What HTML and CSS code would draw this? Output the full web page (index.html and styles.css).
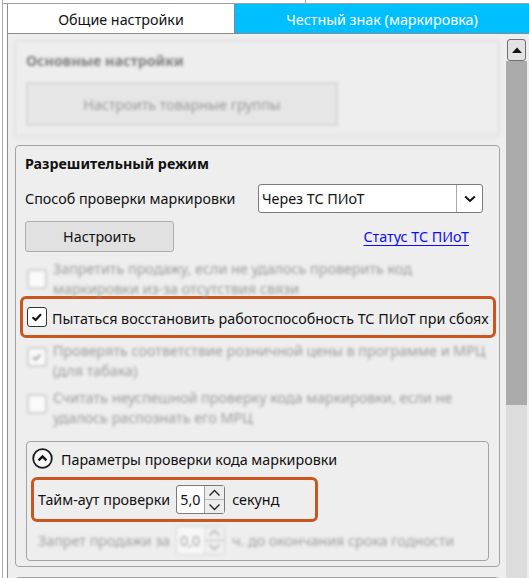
FILE: index.html
```html
<!DOCTYPE html>
<html lang="ru">
<head>
<meta charset="utf-8">
<title>Честный знак (маркировка)</title>
<link rel="stylesheet" href="styles.css">
</head>
<body>
<div class="frame">
  <div class="strip"><div class="strip-left"></div><div class="strip-right"></div></div>
  <div class="pane">
    <div class="tabs">
      <div class="tab tab-inactive">Общие настройки</div>
      <div class="tab tab-active">Честный знак (маркировка)</div>
    </div>
    <div class="content">
      <div class="scroll-area">
        <section class="group group-basic">
          <div class="group-title">Основные настройки</div>
          <div class="btn btn-wide">Настроить товарные группы</div>
        </section>

        <section class="group group-perm">
          <div class="group-title">Разрешительный режим</div>
          <div class="row-method">
            <span class="label">Способ проверки маркировки</span>
            <div class="combo">
              <span class="combo-text">Через ТС ПИоТ</span>
              <span class="combo-btn">
                <svg width="12" height="8" viewBox="0 0 12 8"><path d="M1.2 1.5 L6 6 L10.8 1.5" fill="none" stroke="#111" stroke-width="2"/></svg>
              </span>
            </div>
          </div>
          <div class="row-actions">
            <div class="btn btn-setup">Настроить</div>
            <a class="link" href="#">Статус ТС ПИоТ</a>
          </div>

          <div class="check check-off cb1">
            <span class="box box-off"></span>
            <span class="check-text">Запретить продажу, если не удалось проверить код<br>маркировки из-за отсутствия связи</span>
          </div>

          <div class="hl check-hl">
            <span class="box box-on">
              <svg width="18" height="18" viewBox="0 0 18 18"><path d="M4.5 9.2 L7.6 12 L13 6.2" fill="none" stroke="#111" stroke-width="2.1"/></svg>
            </span>
            <span class="check-text">Пытаться восстановить работоспособность ТС ПИоТ при сбоях</span>
          </div>

          <div class="check check-off cb2">
            <span class="box box-off">
              <svg width="18" height="18" viewBox="0 0 18 18"><path d="M4.5 9.2 L7.6 12 L13 6.2" fill="none" stroke="#9a9a9a" stroke-width="2"/></svg>
            </span>
            <span class="check-text">Проверять соответствие розничной цены в программе и МРЦ<br>(для табака)</span>
          </div>

          <div class="check check-off cb3">
            <span class="box box-off"></span>
            <span class="check-text">Считать неуспешной проверку кода маркировки, если не<br>удалось распознать его МРЦ</span>
          </div>

          <section class="subgroup">
            <div class="sub-header">
              <svg class="collapse-icon" width="21" height="21" viewBox="0 0 21 21"><circle cx="10.5" cy="10.5" r="9.3" fill="#f7f7f7" stroke="#1a1a1a" stroke-width="1.8"/><path d="M6.6 12.4 L10.5 8.5 L14.4 12.4" fill="none" stroke="#111" stroke-width="2.3"/></svg>
              <span>Параметры проверки кода маркировки</span>
            </div>
            <div class="hl timeout-row">
              <span>Тайм-аут проверки</span>
              <div class="spin">
                <span class="spin-val">5,0</span>
                <span class="spin-btns">
                  <span class="spin-half spin-up"><svg width="13" height="8" viewBox="0 0 13 8"><path d="M1.5 6.5 L6.5 1.5 L11.5 6.5" fill="none" stroke="#222" stroke-width="1.4"/></svg></span>
                  <span class="spin-half"><svg width="13" height="8" viewBox="0 0 13 8"><path d="M1.5 1.5 L6.5 6.5 L11.5 1.5" fill="none" stroke="#222" stroke-width="1.4"/></svg></span>
                </span>
              </div>
              <span class="unit">секунд</span>
            </div>
            <div class="expiry-row">
              <span>Запрет продажи за</span>
              <div class="spin spin-off">
                <span class="spin-val">0,0</span>
                <span class="spin-btns">
                  <span class="spin-half spin-up"><svg width="13" height="8" viewBox="0 0 13 8"><path d="M1.5 6.5 L6.5 1.5 L11.5 6.5" fill="none" stroke="#aaa" stroke-width="1.4"/></svg></span>
                  <span class="spin-half"><svg width="13" height="8" viewBox="0 0 13 8"><path d="M1.5 1.5 L6.5 6.5 L11.5 1.5" fill="none" stroke="#aaa" stroke-width="1.4"/></svg></span>
                </span>
              </div>
              <span class="unit">ч. до окончания срока годности</span>
            </div>
          </section>
        </section>

        <section class="group group-next"></section>
      </div>
      <div class="scrollbar">
        <div class="sb-up"><svg width="10" height="6" viewBox="0 0 10 6"><path d="M0 6 L5 0.5 L10 6 Z" fill="#111"/></svg></div>
        <div class="sb-thumb"></div>
        <div class="sb-track"></div>
      </div>
    </div>
  </div>
</div>
</body>
</html>
```

FILE: styles.css
```css
* { box-sizing: border-box; }

html, body {
  margin: 0;
  padding: 0;
}

body {
  width: 529px;
  height: 578px;
  overflow: hidden;
  background: #ffffff;
  font-family: "Noto Sans", "Open Sans", sans-serif;
  font-size: 14.3px;
  color: #111111;
}

.frame {
  margin-left: 2px;
  border-left: 1px solid #a8a8a8;
  height: 578px;
}

.strip {
  height: 4px;
  display: flex;
  border-bottom: 1px solid #a0a0a0;
}

.strip-left {
  width: 303px;
  border-right: 1px solid #a0a0a0;
}

.strip-right { flex: 1; }

.pane {
  margin-left: 4px;
  border-left: 1px solid #8f8f8f;
  height: 574px;
  display: flex;
  flex-direction: column;
}

.tabs {
  display: flex;
  height: 30px;
  flex: none;
  border-bottom: 1px solid #8a8a8a;
}

.tab {
  display: flex;
  align-items: center;
  justify-content: center;
  padding-top: 2px;
}

.tab-inactive {
  width: 227px;
  background: #ffffff;
  border-right: 1px solid #8a8a8a;
}

.tab-active {
  flex: 1;
  background: #00bfff;
  color: #ffffff;
}

.content {
  flex: 1;
  display: flex;
  background: #eeeeee;
  overflow: hidden;
}

.scroll-area {
  width: 498px;
  flex: none;
  padding-top: 6px;
}

.group {
  border: 1px solid #a3a3a3;
  border-radius: 4px;
}

.group-title {
  font-weight: bold;
  line-height: 20px;
}

/* disabled, blurred group */
.group-basic {
  margin-left: 6px;
  width: 486px;
  height: 97px;
  padding: 9px 0 0 10px;
  border: 2px solid #e2e2e2;
  filter: blur(1.4px);
  color: #7c7c7c;
}

.btn {
  background: #e1e1e1;
  border: 1px solid #adadad;
  border-radius: 3px;
  display: flex;
  align-items: center;
  justify-content: center;
}

.btn-wide {
  margin-top: 11px;
  width: 312px;
  height: 44px;
  background: #e6e6e6;
  border: 2px solid #d6d6d6;
  color: #999999;
}

.group-perm {
  margin: 8px 0 0 7px;
  width: 485px;
  height: 422px;
  padding: 8px 9px 0 9px;
}

.row-method {
  display: flex;
  align-items: center;
  margin-top: 10px;
  height: 29px;
}

.label {
  width: 233px;
  flex: none;
}

.combo {
  width: 225px;
  height: 29px;
  display: flex;
  background: #ffffff;
  border: 1px solid #7a7a7a;
  border-radius: 3px;
}

.combo-text {
  flex: 1;
  padding-left: 3px;
  display: flex;
  align-items: center;
}

.combo-btn {
  width: 26px;
  border-left: 1px solid #a8a8a8;
  display: flex;
  align-items: center;
  justify-content: center;
}

.row-actions {
  display: flex;
  align-items: center;
  margin-top: 8px;
  height: 31px;
}

.btn-setup {
  width: 149px;
  height: 31px;
}

.link {
  margin-left: auto;
  margin-right: 21px;
  color: #0a0aff;
  text-decoration: underline;
  text-underline-offset: 3px;
}

.check {
  display: flex;
  align-items: flex-start;
  line-height: 20px;
  margin-left: 2px;
}

.check-text { margin-left: 6px; }

.check-off {
  color: #9c9c9c;
  filter: blur(1.4px);
}

.box {
  width: 20px;
  height: 20px;
  flex: none;
  border: 1px solid #333333;
  border-radius: 3px;
  background: #ffffff;
  display: flex;
  align-items: center;
  justify-content: center;
}

.box-off {
  border: 2px solid #d0d0d0;
  background: #fafafa;
  margin-top: 6px;
}

.cb1 { margin-top: 7px; height: 37px; }
.cb1 .box-off { margin-top: 10px; }
.cb2 { margin-top: 3px; height: 40px; }
.cb3 { margin-top: 7px; height: 40px; }

.hl {
  border: 3px solid #c8561e;
  border-radius: 6px;
  display: flex;
  align-items: center;
}

.check-hl {
  margin-left: -5px;
  width: 476px;
  height: 42px;
  padding-left: 4px;
}

.check-hl .check-text { margin-left: 5px; padding-top: 3px; }

.subgroup {
  margin: 13px 0 0 1px;
  width: 463px;
  height: 120px;
  border: 1px solid #a3a3a3;
  border-radius: 4px;
  padding-top: 6px;
}

.sub-header {
  display: flex;
  align-items: center;
  height: 22px;
  padding-left: 5px;
}

.collapse-icon {
  margin-right: 8px;
  margin-top: -2px;
}

.timeout-row {
  margin: 7px 0 0 4px;
  width: 287px;
  height: 45px;
  padding-left: 4px;
}

.spin {
  width: 49px;
  height: 29px;
  margin-left: 6px;
  display: flex;
  background: #ffffff;
  border: 1px solid #7a7a7a;
  border-radius: 3px;
}

.spin-val {
  flex: 1;
  padding-left: 3px;
  display: flex;
  align-items: center;
}

.spin-btns {
  width: 20px;
  border-left: 1px solid #a0a0a0;
  display: flex;
  flex-direction: column;
  background: #ededed;
}

.spin-half {
  flex: 1;
  display: flex;
  align-items: center;
  justify-content: center;
}

.spin-up { border-bottom: 1px solid #b8b8b8; }

.unit { margin-left: 7px; }

.expiry-row {
  display: flex;
  align-items: center;
  height: 24px;
  margin-top: 6px;
  padding-left: 11px;
  color: #a0a0a0;
  filter: blur(1.4px);
}

.spin-off {
  border: 1px solid #d2d2d2;
  background: #f7f7f7;
}

.spin-off .spin-btns {
  background: #f0f0f0;
  border-left: 1px solid #dddddd;
}

.group-next {
  margin: 10px 0 0 7px;
  width: 485px;
  height: 40px;
}

.scrollbar {
  width: 21px;
  flex: none;
  display: flex;
  flex-direction: column;
  padding-top: 5px;
}

.sb-up {
  height: 22px;
  margin: 0 1px;
  border: 1px solid #6e6e6e;
  border-radius: 3px;
  background: #e2e2e2;
  display: flex;
  align-items: center;
  justify-content: center;
}

.sb-thumb {
  height: 344px;
  background: #ababab;
}

.sb-track {
  flex: 1;
  background: #dcdcdc;
}
```
